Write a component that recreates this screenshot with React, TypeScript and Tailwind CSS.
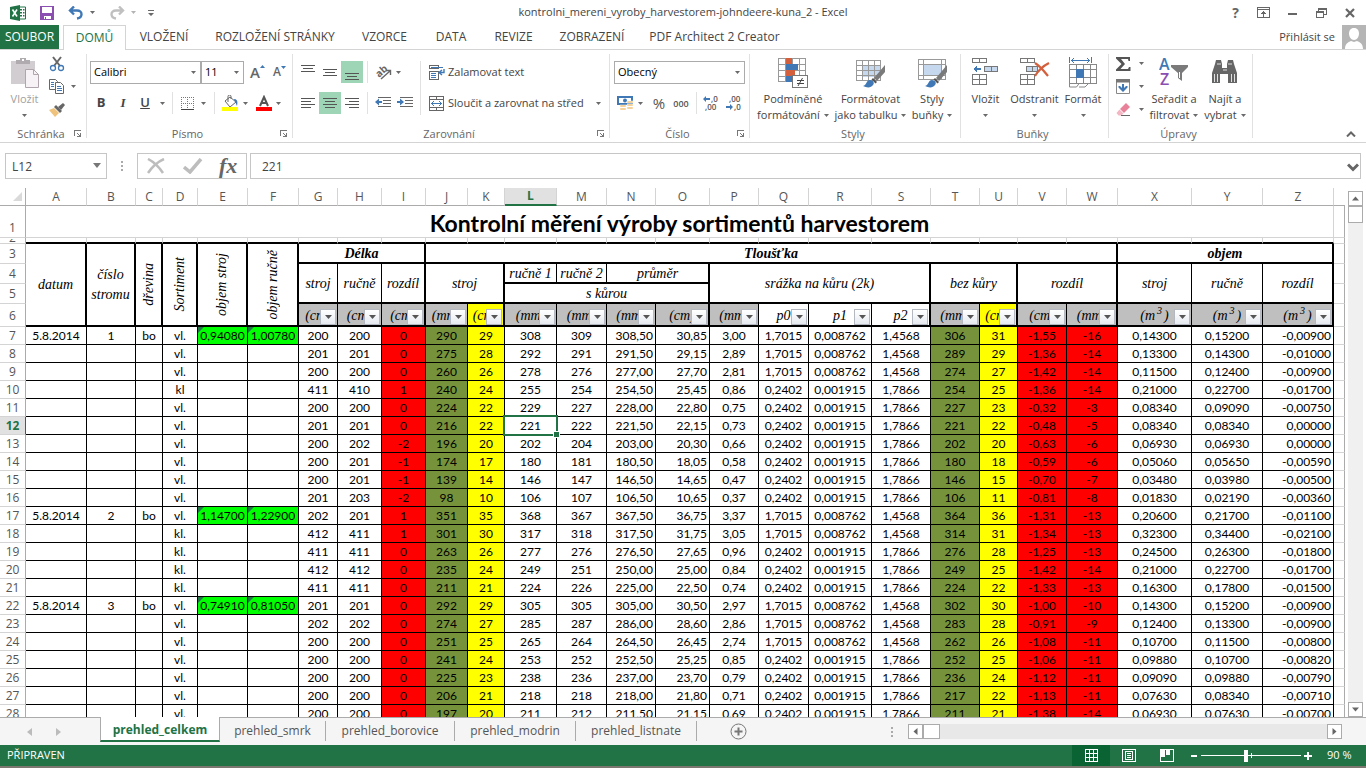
// App.tsx
// ─────────────────────────────────────────────────────
// Spreadsheet window: title bar, ribbon, formula bar,
// measurement sheet, sheet tabs and status bar.
// ─────────────────────────────────────────────────────

import type { ReactNode } from 'react';

/* ── Sheet data ─────────────────────────────────────── */

const COLUMNS: [string, string][] = [
  ['A', 'w-[61px]'],
  ['B', 'w-[49px]'],
  ['C', 'w-[27px]'],
  ['D', 'w-[35px]'],
  ['E', 'w-[50px]'],
  ['F', 'w-[51px]'],
  ['G', 'w-[39px]'],
  ['H', 'w-[44px]'],
  ['I', 'w-[44px]'],
  ['J', 'w-[42px]'],
  ['K', 'w-[37px]'],
  ['L', 'w-[52px]'],
  ['M', 'w-[50px]'],
  ['N', 'w-[49px]'],
  ['O', 'w-[54px]'],
  ['P', 'w-[49px]'],
  ['Q', 'w-[50px]'],
  ['R', 'w-[63px]'],
  ['S', 'w-[59px]'],
  ['T', 'w-[49px]'],
  ['U', 'w-[38px]'],
  ['V', 'w-[49px]'],
  ['W', 'w-[51px]'],
  ['X', 'w-[74px]'],
  ['Y', 'w-[71px]'],
  ['Z', 'w-[71px]'],
];

// Each line: sortiment followed by the values of columns G to Z
const MEASUREMENTS = [
  'vl. 200 200 0 290 29 308 309 308,50 30,85 3,00 1,7015 0,008762 1,4568 306 31 -1,55 -16 0,14300 0,15200 -0,00900',
  'vl. 201 201 0 275 28 292 291 291,50 29,15 2,89 1,7015 0,008762 1,4568 289 29 -1,36 -14 0,13300 0,14300 -0,01000',
  'vl. 200 200 0 260 26 278 276 277,00 27,70 2,81 1,7015 0,008762 1,4568 274 27 -1,42 -14 0,11500 0,12400 -0,00900',
  'kl 411 410 1 240 24 255 254 254,50 25,45 0,86 0,2402 0,001915 1,7866 254 25 -1,36 -14 0,21000 0,22700 -0,01700',
  'vl. 200 200 0 224 22 229 227 228,00 22,80 0,75 0,2402 0,001915 1,7866 227 23 -0,32 -3 0,08340 0,09090 -0,00750',
  'vl. 201 201 0 216 22 221 222 221,50 22,15 0,73 0,2402 0,001915 1,7866 221 22 -0,48 -5 0,08340 0,08340 0,00000',
  'vl. 200 202 -2 196 20 202 204 203,00 20,30 0,66 0,2402 0,001915 1,7866 202 20 -0,63 -6 0,06930 0,06930 0,00000',
  'vl. 200 201 -1 174 17 180 181 180,50 18,05 0,58 0,2402 0,001915 1,7866 180 18 -0,59 -6 0,05060 0,05650 -0,00590',
  'vl. 200 201 -1 139 14 146 147 146,50 14,65 0,47 0,2402 0,001915 1,7866 146 15 -0,70 -7 0,03480 0,03980 -0,00500',
  'vl. 201 203 -2 98 10 106 107 106,50 10,65 0,37 0,2402 0,001915 1,7866 106 11 -0,81 -8 0,01830 0,02190 -0,00360',
  'vl. 202 201 1 351 35 368 367 367,50 36,75 3,37 1,7015 0,008762 1,4568 364 36 -1,31 -13 0,20600 0,21700 -0,01100',
  'kl. 412 411 1 301 30 317 318 317,50 31,75 3,05 1,7015 0,008762 1,4568 314 31 -1,34 -13 0,32300 0,34400 -0,02100',
  'kl. 411 411 0 263 26 277 276 276,50 27,65 0,96 0,2402 0,001915 1,7866 276 28 -1,25 -13 0,24500 0,26300 -0,01800',
  'kl. 412 412 0 235 24 249 251 250,00 25,00 0,84 0,2402 0,001915 1,7866 249 25 -1,42 -14 0,21000 0,22700 -0,01700',
  'kl. 411 411 0 211 21 224 226 225,00 22,50 0,74 0,2402 0,001915 1,7866 224 22 -1,33 -13 0,16300 0,17800 -0,01500',
  'vl. 201 201 0 292 29 305 305 305,00 30,50 2,97 1,7015 0,008762 1,4568 302 30 -1,00 -10 0,14300 0,15200 -0,00900',
  'vl. 202 202 0 274 27 285 287 286,00 28,60 2,86 1,7015 0,008762 1,4568 283 28 -0,91 -9 0,12400 0,13300 -0,00900',
  'vl. 200 200 0 251 25 265 264 264,50 26,45 2,74 1,7015 0,008762 1,4568 262 26 -1,08 -11 0,10700 0,11500 -0,00800',
  'vl. 200 200 0 241 24 253 252 252,50 25,25 0,85 0,2402 0,001915 1,7866 252 25 -1,06 -11 0,09880 0,10700 -0,00820',
  'vl. 200 200 0 225 23 238 236 237,00 23,70 0,79 0,2402 0,001915 1,7866 236 24 -1,12 -11 0,09090 0,09880 -0,00790',
  'vl. 200 200 0 206 21 218 218 218,00 21,80 0,71 0,2402 0,001915 1,7866 217 22 -1,13 -11 0,07630 0,08340 -0,00710',
  'vl. 200 200 0 197 20 211 212 211,50 21,15 0,69 0,2402 0,001915 1,7866 211 21 -1,38 -14 0,06930 0,07630 -0,00700',
];

const FIRST_ROW = 7;

// Columns A, B, C, E and F are filled only on the first row of a tree
const TREES: Record<number, string[]> = {
  7: ['5.8.2014', '1', 'bo', '0,94080', '1,00780'],
  17: ['5.8.2014', '2', 'bo', '1,14700', '1,22900'],
  22: ['5.8.2014', '3', 'bo', '0,74910', '0,81050'],
};

const FILL: Record<string, string> = {
  I: 'bg-[#ff0000]',
  J: 'bg-[#76933c]',
  K: 'bg-[#ffff00]',
  T: 'bg-[#76933c]',
  U: 'bg-[#ffff00]',
  V: 'bg-[#ff0000]',
  W: 'bg-[#ff0000]',
};

const RIGHT_ALIGNED = ['N', 'O', 'Z'];

const FILTERS: { unit: string; plain?: boolean; yellow?: boolean; cubic?: boolean; thick?: boolean }[] = [
  { unit: '(cm)' },
  { unit: '(cm)' },
  { unit: '(cm)', thick: true },
  { unit: '(mm)' },
  { unit: '(cm)', yellow: true, thick: true },
  { unit: '(mm)' },
  { unit: '(mm)' },
  { unit: '(mm)' },
  { unit: '(cm)', thick: true },
  { unit: '(mm)' },
  { unit: 'p0', plain: true },
  { unit: 'p1', plain: true },
  { unit: 'p2', plain: true, thick: true },
  { unit: '(mm)' },
  { unit: '(cm)', yellow: true, thick: true },
  { unit: '(cm)' },
  { unit: '(mm)', thick: true },
  { unit: '(m', cubic: true },
  { unit: '(m', cubic: true },
  { unit: '(m', cubic: true, thick: true },
];

/* ── Small shared pieces ────────────────────────────── */

function Caret() {
  return (
    <svg className="shrink-0" width="5" height="3" viewBox="0 0 5 3" aria-hidden="true">
      <path d="M0 0h5L2.5 3z" fill="#6a6a6a" />
    </svg>
  );
}

function CaretButton({ label }: { label: string }) {
  return (
    <button type="button" aria-label={label} className="flex h-[22px] w-3 items-center justify-center">
      <Caret />
    </button>
  );
}

function IconButton({ label, active, children }: { label: string; active?: boolean; children: ReactNode }) {
  return (
    <button
      type="button"
      aria-label={label}
      className={`flex h-[22px] w-[22px] shrink-0 items-center justify-center ${active ? 'bg-[#9fd5b7]' : ''}`}
    >
      {children}
    </button>
  );
}

function Divider() {
  return <div className="h-[22px] w-px shrink-0 bg-[#e1e1e1]" />;
}

function Group({ name, width, launcher, children }: { name: string; width: string; launcher?: boolean; children: ReactNode }) {
  return (
    <>
      <section aria-label={name} className={`flex shrink-0 flex-col ${width}`}>
        <div className="flex h-[76px]">{children}</div>
        <div className="flex h-4 items-center pr-1 text-[#666]">
          <span className="grow pl-2 text-center">{name}</span>
          <span className="w-2">
            {launcher && (
              <button type="button" aria-label={`${name} – další možnosti`} className="block">
                <svg width="8" height="8" viewBox="0 0 8 8" shapeRendering="crispEdges" fill="#777" aria-hidden="true">
                  <path d="M0 0h7v1H1v5H0zM3 3h1v1h1v1h1V3h1v4H3V6h2V5H4V4H3z" />
                </svg>
              </button>
            )}
          </span>
        </div>
      </section>
      <div className="my-1 w-px shrink-0 bg-[#e1e1e1]" />
    </>
  );
}

function BigButton({ icon, lines, width, muted }: { icon: ReactNode; lines: [string, string]; width: string; muted?: boolean }) {
  return (
    <button
      type="button"
      className={`flex shrink-0 flex-col items-center pt-[7px] leading-4 whitespace-nowrap ${width} ${muted ? 'text-[#a0a0a0]' : 'text-[#444]'}`}
    >
      <span className="mb-[2px] flex h-8 items-start">{icon}</span>
      <span>{lines[0]}</span>
      <span className="flex h-4 items-center">
        {lines[1] && <span className="mr-1">{lines[1]}</span>}
        <Caret />
      </span>
    </button>
  );
}

function Lines({ rows, y = 0 }: { rows: [number, number][]; y?: number }) {
  return (
    <svg width="16" height="16" viewBox="0 0 16 16" shapeRendering="crispEdges" fill="#555" aria-hidden="true">
      {rows.map(([x, w], i) => (
        <rect key={i} x={x} y={y + i * 3} width={w} height="1" />
      ))}
    </svg>
  );
}

/* ── Title bar ──────────────────────────────────────── */

function TitleBar() {
  return (
    <header className="relative flex h-[25px] shrink-0 items-center justify-between">
      <div className="flex items-center pl-[10px]">
        <svg width="16" height="16" viewBox="0 0 16 16" aria-hidden="true">
          <path d="M9 2h6.5v12H9" fill="#fff" stroke="#217346" />
          <path d="M10 4h2v1.5h-2zm3 0h1.5v1.5H13zM10 7h2v1.5h-2zm3 0h1.5v1.5H13zM10 10h2v1.5h-2zm3 0h1.5v1.5H13z" fill="#217346" />
          <path d="M0 2l10-2v16L0 14z" fill="#217346" />
          <path d="M2.5 4.500l4.500 7M7 4.500l-4.500 7" stroke="#fff" strokeWidth="1.600" />
        </svg>
        <button type="button" aria-label="Uložit" className="ml-[14px]">
          <svg width="14" height="14" viewBox="0 0 14 14" shapeRendering="crispEdges" aria-hidden="true">
            <path d="M0 0h14v14H0z" fill="#8a4fb0" />
            <path d="M2 1h10v6H2zM4 10h7v3H6v-2H5v2H4z" fill="#fff" />
          </svg>
        </button>
        <button type="button" aria-label="Zpět" className="ml-[14px]">
          <svg width="16" height="14" viewBox="0 0 16 14" fill="none" stroke="#3f78b5" strokeWidth="2.400" aria-hidden="true">
            <path d="M6 0.500L2 4.500l4 4M2 4.500h7c6 0 6 7 0 8" />
          </svg>
        </button>
        <span className="ml-[6px]"><Caret /></span>
        <button type="button" aria-label="Znovu" className="ml-[14px]">
          <svg width="16" height="14" viewBox="0 0 16 14" fill="none" stroke="#c0c0c0" strokeWidth="2.400" aria-hidden="true">
            <path d="M10 0.500l4 4-4 4M14 4.500H7c-6 0-6 7 0 8" />
          </svg>
        </button>
        <span className="ml-[6px] opacity-50"><Caret /></span>
        <button type="button" aria-label="Panel nástrojů Rychlý přístup" className="ml-3">
          <svg width="6" height="6" viewBox="0 0 6 6" fill="#6a6a6a" aria-hidden="true">
            <path d="M0 0h6v1H0zM0 3h6L3 6z" />
          </svg>
        </button>
      </div>
      <h1 className="absolute inset-x-0 text-center text-[#444]">
        kontrolni_mereni_vyroby_harvestorem-johndeere-kuna_2 - Excel
      </h1>
      <div className="relative flex items-center gap-[18px] pr-[11px] text-[#666]">
        <button type="button" aria-label="Nápověda" className="text-sm leading-none font-bold">?</button>
        <button type="button" aria-label="Možnosti zobrazení pásu karet">
          <svg width="13" height="11" viewBox="0 0 13 11" shapeRendering="crispEdges" fill="#666" aria-hidden="true">
            <path d="M0 0h13v11H0zM1 1v1h11V1zM1 3v7h11V3z" fillRule="evenodd" />
            <path d="M6 4h1v1h1v1h1v1H7v3H6V7H4V6h1V5h1z" />
          </svg>
        </button>
        <button type="button" aria-label="Minimalizovat">
          <svg width="10" height="10" viewBox="0 0 10 10" aria-hidden="true"><path d="M0 5h9v2H0z" fill="#666" /></svg>
        </button>
        <button type="button" aria-label="Obnovit">
          <svg width="11" height="10" viewBox="0 0 11 10" fill="none" stroke="#666" shapeRendering="crispEdges" aria-hidden="true">
            <path d="M2.500 3V.5h8V6H8M2 1.500h8M.5 3.500h7v6h-7zM0 4.500h8" />
          </svg>
        </button>
        <button type="button" aria-label="Zavřít">
          <svg width="10" height="10" viewBox="0 0 10 10" stroke="#666" strokeWidth="2.200" aria-hidden="true">
            <path d="M1 1l8 8M9 1L1 9" />
          </svg>
        </button>
      </div>
    </header>
  );
}

/* ── Ribbon tabs ────────────────────────────────────── */

const TABS: [string, string][] = [
  ['VLOŽENÍ', 'w-[76px]'],
  ['ROZLOŽENÍ STRÁNKY', 'w-[146px]'],
  ['VZORCE', 'w-[73px]'],
  ['DATA', 'w-[60px]'],
  ['REVIZE', 'w-[65px]'],
  ['ZOBRAZENÍ', 'w-[92px]'],
  ['PDF Architect 2 Creator', 'w-[153px]'],
];

function RibbonTabs() {
  return (
    <nav className="flex h-[25px] shrink-0 border-b border-[#d4d4d4] text-xs text-[#444]">
      <button type="button" className="w-[59px] bg-[#217346] text-white">SOUBOR</button>
      <button type="button" className="-mb-px ml-1 w-[63px] border border-b-0 border-[#d4d4d4] bg-white text-[#217346]">
        DOMŮ
      </button>
      {TABS.map(([name, width]) => (
        <button key={name} type="button" className={`shrink-0 whitespace-nowrap ${width}`}>{name}</button>
      ))}
      <button type="button" className="ml-auto pr-[7px] text-[11px]">Přihlásit se</button>
      <svg width="24" height="24" viewBox="0 0 24 24" className="shrink-0 bg-[#b5b5b5]" fill="#fff" aria-hidden="true">
        <path d="M12 3c3.500 0 5 2.500 5 5.500S15 15 12 15s-5-3.500-5-6.500S8.500 3 12 3z" />
        <path d="M3 24c0-5 3-7 6-8l3 1 3-1c3 1 6 3 6 8z" />
      </svg>
    </nav>
  );
}

/* ── Ribbon groups ──────────────────────────────────── */

function ClipboardGroup() {
  return (
    <Group name="Schránka" width="w-[86px]" launcher>
      <BigButton
        width="w-[49px]"
        muted
        lines={['Vložit', '']}
        icon={
          <svg width="30" height="32" viewBox="0 0 30 32" aria-hidden="true">
            <path d="M1 4h24v23H1z" fill="#d2cdd0" />
            <path d="M6 7V3h4V1h6v2h4v4z" fill="#b0abae" />
            <path d="M12 2h2v2h-2z" fill="#fff" />
            <path d="M15.500 12.500h8l5 5v13h-13z" fill="#f7f2f5" stroke="#b0a5ac" />
            <path d="M23.500 12.500v5h5" fill="none" stroke="#b0a5ac" />
          </svg>
        }
      />
      <div className="flex flex-col pt-[2px]">
        <button type="button" aria-label="Vyjmout" className="flex h-[23px] items-center">
          <svg width="16" height="16" viewBox="0 0 16 16" fill="none" aria-hidden="true">
            <path d="M4 1l7 9M12 1L5 10" stroke="#666" strokeWidth="2" />
            <circle cx="4" cy="12" r="2.500" stroke="#3f78b5" strokeWidth="1.300" />
            <circle cx="12" cy="12" r="2.500" stroke="#3f78b5" strokeWidth="1.300" />
          </svg>
        </button>
        <div className="flex h-[23px] items-center gap-[6px]">
          <button type="button" aria-label="Kopírovat">
            <svg width="16" height="15" viewBox="0 0 16 15" fill="#fff" stroke="#666" aria-hidden="true">
              <path d="M.5 .5h6l2 2v8h-8z" />
              <path d="M2 3.500h3M2 5.500h3M2 7.500h3" stroke="#3f78b5" />
              <path d="M6.500 3.500h5l3 3v8h-8z" />
              <path d="M8 7.500h4M8 9.500h5M8 11.500h5" stroke="#3f78b5" />
            </svg>
          </button>
          <Caret />
        </div>
        <button type="button" aria-label="Kopírovat formát" className="flex h-[23px] items-center">
          <svg width="16" height="14" viewBox="0 0 16 14" aria-hidden="true">
            <path d="M0 7l5-2 5 5-4 4z" fill="#efc37c" />
            <path d="M5 4l2-2 6 6-2 2z" fill="#666" />
            <path d="M9 4l5-4 2 2-4 5z" fill="#666" />
          </svg>
        </button>
      </div>
    </Group>
  );
}

function FontGroup() {
  return (
    <Group name="Písmo" width="w-[205px]" launcher>
      <div className="flex flex-col gap-[9px] pt-[11px] pl-[3px]">
        <div className="flex h-[22px] items-center">
          <div className="relative h-[23px] w-[111px]">
            <select aria-label="Písmo" className="h-full w-full appearance-none border border-[#ababab] bg-white pl-[3px] text-black">
              <option>Calibri</option>
            </select>
            <span className="pointer-events-none absolute inset-y-0 right-[5px] flex items-center"><Caret /></span>
          </div>
          <div className="relative h-[23px] w-[43px]">
            <select aria-label="Velikost písma" className="h-full w-full appearance-none border border-[#ababab] bg-white pl-[3px] text-black">
              <option>11</option>
            </select>
            <span className="pointer-events-none absolute inset-y-0 right-[5px] flex items-center"><Caret /></span>
          </div>
          <button type="button" aria-label="Zvětšit písmo" className="ml-[6px] flex w-4">
            <span className="text-[15px] leading-none font-semibold text-[#666]">A</span>
            <svg width="5" height="3" viewBox="0 0 5 3" aria-hidden="true"><path d="M0 3h5L2.500 0z" fill="#3f78b5" /></svg>
          </button>
          <button type="button" aria-label="Zmenšit písmo" className="ml-[7px] flex w-4">
            <span className="text-xs leading-none font-semibold text-[#666]">A</span>
            <svg width="5" height="3" viewBox="0 0 5 3" aria-hidden="true"><path d="M0 0h5L2.500 3z" fill="#3f78b5" /></svg>
          </button>
        </div>
        <div className="flex h-[22px] items-center text-[13px] text-[#444]">
          <IconButton label="Tučné"><b>B</b></IconButton>
          <IconButton label="Kurzíva"><i className="font-['Liberation_Serif',serif] font-bold">I</i></IconButton>
          <IconButton label="Podtržené"><u className="font-semibold">U</u></IconButton>
          <CaretButton label="Druh podtržení" />
          <span className="mr-[5px] ml-1"><Divider /></span>
          <button type="button" aria-label="Ohraničení" className="mx-[3px]">
            <svg width="13" height="13" viewBox="0 0 13 13" fill="none" stroke="#777" shapeRendering="crispEdges" aria-hidden="true">
              <path d="M.5 0v12M6.500 0v12M12.500 0v12M0 .5h13M0 6.500h13" strokeDasharray="1 1" />
              <path d="M0 12.500h13" stroke="#444" />
            </svg>
          </button>
          <CaretButton label="Druh ohraničení" />
          <span className="ml-[5px]"><Divider /></span>
          <button type="button" aria-label="Barva výplně" className="ml-[7px]">
            <svg width="17" height="16" viewBox="0 0 17 16" aria-hidden="true">
              <path d="M3 6l5-4 6 5-6 5z" fill="#fff" stroke="#666" />
              <path d="M6 7V1.500a1.500 1.500 0 013 0V4" fill="none" stroke="#666" />
              <path d="M12 4c3 0 4 2 3 7-1-2-1-3-2-4z" fill="#3f78b5" />
              <path d="M0 12h16v4H0z" fill="#ff0" />
            </svg>
          </button>
          <CaretButton label="Další barvy výplně" />
          <button type="button" aria-label="Barva písma" className="ml-[5px]">
            <svg width="16" height="16" viewBox="0 0 16 16" aria-hidden="true">
              <path d="M4 11L8 2l4 9M5.500 8h5" fill="none" stroke="#555" strokeWidth="2" />
              <path d="M0 12h16v4H0z" fill="#f00" />
            </svg>
          </button>
          <CaretButton label="Další barvy písma" />
        </div>
      </div>
    </Group>
  );
}

function AlignGroup() {
  return (
    <Group name="Zarovnání" width="w-[316px]" launcher>
      <div className="flex flex-col gap-[9px] pt-[11px] pl-1">
        <div className="flex h-[22px] items-center">
          <IconButton label="Zarovnat nahoru"><Lines rows={[[1, 14], [3, 10], [1, 14]]} y={1} /></IconButton>
          <IconButton label="Zarovnat na střed svisle"><Lines rows={[[1, 14], [3, 10], [1, 14]]} y={5} /></IconButton>
          <IconButton label="Zarovnat dolů" active><Lines rows={[[1, 14], [3, 10], [1, 14]]} y={9} /></IconButton>
          <span className="ml-1"><Divider /></span>
          <button type="button" aria-label="Orientace" className="ml-2">
            <svg width="16" height="15" viewBox="0 0 16 15" className="overflow-visible" aria-hidden="true">
              <text x="0" y="11" fontSize="10" fontWeight="700" fontFamily="Open Sans" fill="#666" transform="rotate(-42 4 8)">ab</text>
              <path d="M5 14l9-8M14.500 10V5.500H10" fill="none" stroke="#666" strokeWidth="1.400" />
            </svg>
          </button>
          <CaretButton label="Další orientace" />
        </div>
        <div className="flex h-[22px] items-center">
          <IconButton label="Zarovnat vlevo"><Lines rows={[[1, 14], [1, 10], [1, 14], [1, 10]]} y={3} /></IconButton>
          <IconButton label="Zarovnat na střed" active><Lines rows={[[1, 14], [3, 10], [1, 14], [3, 10]]} y={3} /></IconButton>
          <IconButton label="Zarovnat vpravo"><Lines rows={[[1, 14], [5, 10], [1, 14], [5, 10]]} y={3} /></IconButton>
          <span className="ml-1"><Divider /></span>
          <button type="button" aria-label="Zmenšit odsazení" className="ml-[7px]">
            <svg width="16" height="12" viewBox="0 0 16 12" aria-hidden="true">
              <path d="M3 .5h13M8 3.500h8M8 6.500h8M3 9.500h13" stroke="#666" shapeRendering="crispEdges" />
              <path d="M0 5l4-3.500V4h3v2H4v2.500z" fill="#3f78b5" />
            </svg>
          </button>
          <button type="button" aria-label="Zvětšit odsazení" className="ml-[6px]">
            <svg width="16" height="12" viewBox="0 0 16 12" aria-hidden="true">
              <path d="M3 .5h13M8 3.500h8M8 6.500h8M3 9.500h13" stroke="#666" shapeRendering="crispEdges" />
              <path d="M7 5L3 1.500V4H0v2h3v2.500z" fill="#3f78b5" />
            </svg>
          </button>
        </div>
      </div>
      <div className="mt-[11px] ml-[7px] h-[54px] w-px bg-[#e1e1e1]" />
      <div className="flex flex-col gap-[9px] pt-[11px] pl-2 text-[#444]">
        <button type="button" className="flex h-[22px] items-center gap-[3px]">
          <svg width="16" height="16" viewBox="0 0 16 16" fill="none" stroke="#666" aria-hidden="true">
            <path d="M.5 1.500h9v3h-9zM.5 7.500h9v8h-9z" shapeRendering="crispEdges" />
            <path d="M2 3.500h12M2 9.500h5M2 11.500h5M2 13.500h5" stroke="#3f78b5" shapeRendering="crispEdges" />
            <path d="M15 5v3.500h-4M13 6l-3 2.500 3 2.500" stroke="#3f78b5" strokeWidth="1.400" />
          </svg>
          Zalamovat text
        </button>
        <div className="flex h-[22px] items-center">
          <button type="button" className="flex items-center gap-[3px] whitespace-nowrap">
            <svg width="16" height="15" viewBox="0 0 16 15" fill="none" stroke="#666" aria-hidden="true">
              <path d="M.5 .5h14v14H.5zM0 3.500h15M0 11.500h15M7.500 0v4M7.500 11v4" shapeRendering="crispEdges" />
              <path d="M2 7.500h11M5 5L2.500 7.500 5 10M10 5l2.500 2.500L10 10" stroke="#3f78b5" />
            </svg>
            Sloučit a zarovnat na střed
          </button>
          <span className="ml-auto pl-[9px]"><CaretButton label="Možnosti sloučení" /></span>
        </div>
      </div>
    </Group>
  );
}

function NumberGroup() {
  return (
    <Group name="Číslo" width="w-[139px]" launcher>
      <div className="flex flex-col gap-[9px] pt-[11px] pl-1">
        <div className="relative h-[22px] w-[131px]">
          <select aria-label="Formát čísla" className="h-[23px] w-full appearance-none border border-[#ababab] bg-white pl-[3px] text-black">
            <option>Obecný</option>
          </select>
          <span className="pointer-events-none absolute inset-y-0 right-[5px] flex items-center"><Caret /></span>
        </div>
        <div className="flex h-[22px] items-center text-[#555]">
          <button type="button" aria-label="Účetní formát" className="ml-[3px]">
            <svg width="17" height="16" viewBox="0 0 17 16" aria-hidden="true">
              <path d="M0 1h16v9H0z" fill="#3f78b5" />
              <path d="M2 3h12v5H2z" fill="#fff" />
              <circle cx="8" cy="5.500" r="2" fill="#3f78b5" />
              <path d="M10 6h6v2h-6zM10 9h6v2h-6zM10 12h6v2h-6zM3 10h6v2H3zM3 13h6v2H3z" fill="#efc37c" stroke="#fff" strokeWidth=".5" />
            </svg>
          </button>
          <CaretButton label="Další měny" />
          <button type="button" aria-label="Styl procent" className="ml-1 w-[18px] text-[15px] leading-none">%</button>
          <button type="button" aria-label="Styl čárky" className="ml-[4px] w-[18px] text-[9px] leading-none font-semibold">000</button>
          <span className="ml-[6px]"><Divider /></span>
          <button type="button" aria-label="Přidat desetinné místo" className="ml-[6px]">
            <svg width="16" height="16" viewBox="0 0 16 16" className="overflow-visible" fontSize="8" fontWeight="600" fontFamily="Open Sans" fill="#555" aria-hidden="true">
              <path d="M0 4l3-3v2h4v2H3v2z" fill="#3f78b5" />
              <text x="8" y="7">,0</text>
              <text x="2" y="15">,00</text>
            </svg>
          </button>
          <button type="button" aria-label="Odebrat desetinné místo" className="ml-[7px]">
            <svg width="16" height="16" viewBox="0 0 16 16" className="overflow-visible" fontSize="8" fontWeight="600" fontFamily="Open Sans" fill="#555" aria-hidden="true">
              <text x="3" y="7">,00</text>
              <path d="M7 12L4 9v2H0v2h4v2z" fill="#3f78b5" />
              <text x="8" y="15">,0</text>
            </svg>
          </button>
        </div>
      </div>
    </Group>
  );
}

function Brush() {
  return (
    <>
      <path d="M30 8v7l-8 9-3-3z" fill="#7a7a7a" />
      <path d="M18 21l4 4-1.500 1.500-4-4z" fill="#555" />
      <path d="M8 29c4-1 3-6 7-6 3 0 5 3 3 5-2 3-6 3-10 1z" fill="#3f78b5" />
    </>
  );
}

function StylesGroup() {
  return (
    <Group name="Styly" width="w-[210px]">
      <BigButton
        width="ml-1 w-[78px]"
        lines={['Podmíněné', 'formátování']}
        icon={
          <svg width="31" height="31" viewBox="0 0 31 31" shapeRendering="crispEdges" aria-hidden="true">
            <path d="M.5 1.500h27v23H.5zM0 7.500h28M0 13.500h28M0 19.500h28M7.500 1v24M14.500 1v24M21.500 1v24" fill="#fff" stroke="#999" />
            <path d="M8 1h6v6H8zM8 13h9v6H8z" fill="#d35f3c" />
            <path d="M8 7h12v6H8zM8 19h6v6H8z" fill="#3f78b5" />
            <path d="M14.500 18.500h15v12h-15z" fill="#fff" stroke="#777" />
            <path d="M19 23h7v1h-7zM19 26h7v1h-7z" fill="#444" />
            <path d="M24.500 21L20 29" stroke="#444" shapeRendering="auto" />
          </svg>
        }
      />
      <BigButton
        width="w-[77px]"
        lines={['Formátovat', 'jako tabulku']}
        icon={
          <svg width="31" height="31" viewBox="0 0 31 31" aria-hidden="true">
            <path d="M1 3h24v23H1z" fill="#fff" />
            <path d="M7 8h18v12H7z" fill="#c5d8ee" />
            <path d="M1.500 3.500h24v20h-24zM1 8.500h25M1 13.500h25M1 18.500h25M7.500 3v21M13.500 3v21M19.500 3v21" fill="none" stroke="#999" shapeRendering="crispEdges" />
            <Brush />
          </svg>
        }
      />
      <BigButton
        width="w-[46px]"
        lines={['Styly', 'buňky']}
        icon={
          <svg width="31" height="31" viewBox="0 0 31 31" aria-hidden="true">
            <path d="M1.500 2.500h27v20h-27zM1 7.500h28M1 18.500h28M6.500 2v21M24.500 2v21" fill="#fff" stroke="#999" shapeRendering="crispEdges" />
            <path d="M7 8h17v10H7z" fill="#c5d8ee" />
            <Brush />
          </svg>
        }
      />
    </Group>
  );
}

function CellsGroup() {
  return (
    <Group name="Buňky" width="w-[147px]">
      <BigButton
        width="w-[49px]"
        lines={['Vložit', '']}
        icon={
          <svg width="27" height="30" viewBox="0 0 27 30" shapeRendering="crispEdges" fill="none" stroke="#777" aria-hidden="true">
            <path d="M.5 1.500h14v4H.5zM7.500 1v5M.5 17.500h14v10H.5zM0 22.500h15M7.500 17v11" />
            <path d="M12.500 9.500h13v5h-13zM19.500 9v6" fill="#c5d8ee" />
            <path d="M1 12l4-3v2h4v2H5v2z" fill="#3f78b5" stroke="none" />
          </svg>
        }
      />
      <BigButton
        width="w-[49px]"
        lines={['Odstranit', '']}
        icon={
          <svg width="30" height="30" viewBox="0 0 30 30" fill="none" stroke="#777" aria-hidden="true">
            <path d="M.5 1.500h14v4H.5zM7.500 1v5M.5 17.500h14v10H.5zM0 22.500h15M7.500 17v11" shapeRendering="crispEdges" />
            <path d="M6.500 9.500h11v5h-11zM12.500 9v6" fill="#c5d8ee" shapeRendering="crispEdges" />
            <path d="M15 6c5 3 9 8 13 13M29 6c-6 3-11 8-14 13" stroke="#d35f3c" strokeWidth="2.200" />
          </svg>
        }
      />
      <BigButton
        width="w-[48px]"
        lines={['Formát', '']}
        icon={
          <svg width="30" height="32" viewBox="0 0 30 32" fill="none" stroke="#888" aria-hidden="true">
            <path d="M1.500 7.500h27v19h-27zM1 12.500h28M1 20.500h28M8.500 7v20M15.500 7v20M22.500 7v20" shapeRendering="crispEdges" />
            <path d="M8 12h8v9H8z" fill="#3f78b5" stroke="none" />
            <path d="M1.500 26v4h7l3-4M11 30h6l4-4" />
            <path d="M1.500 0v6M23.500 0v6M3 3.500h19M6 1L3.500 3.500 6 6M19 1l2.500 2.500L19 6" stroke="#3f78b5" />
          </svg>
        }
      />
    </Group>
  );
}

function EditingGroup() {
  return (
    <Group name="Úpravy" width="w-[143px]">
      <div className="flex w-[38px] flex-col pt-[2px] pl-[7px]">
        <div className="flex h-[23px] items-center gap-2">
          <button type="button" aria-label="Součet">
            <svg width="15" height="14" viewBox="0 0 15 14" aria-hidden="true">
              <path d="M0 0h14v4h-1.500L12 2H5l4 5-4.500 5H12l1-2h1.500v4H0v-1.500L5.500 7 0 1.500z" fill="#555" />
            </svg>
          </button>
          <Caret />
        </div>
        <div className="flex h-[23px] items-center gap-2">
          <button type="button" aria-label="Vyplnit">
            <svg width="15" height="15" viewBox="0 0 15 15" aria-hidden="true">
              <path d="M.5 .5h13v14H.5z" fill="#fff" stroke="#888" />
              <path d="M0 0h14v3.500H0z" fill="#777" />
              <path d="M6 5h2v4l2-2h1.500v1.500L7 13 2.500 8.500V7H4l2 2z" fill="#3f78b5" />
            </svg>
          </button>
          <Caret />
        </div>
        <div className="flex h-[23px] items-center gap-2">
          <button type="button" aria-label="Vymazat">
            <svg width="15" height="14" viewBox="0 0 15 14" aria-hidden="true">
              <path d="M4 6l6-6 4 4-6 6z" fill="#e8829a" />
              <path d="M3.500 6.500l4 4-2 2h-3L.5 10z" fill="#f3b6c3" />
              <path d="M5 12.500h9" stroke="#666" />
            </svg>
          </button>
          <Caret />
        </div>
      </div>
      <BigButton
        width="w-[54px]"
        lines={['Seřadit a', 'filtrovat']}
        icon={
          <svg width="30" height="30" viewBox="0 0 30 30" fontFamily="Open Sans" fontWeight="600" fontSize="16" aria-hidden="true">
            <text x="0" y="13" fill="#3f78b5">A</text>
            <text x="1" y="28" fill="#8a4fb0">Z</text>
            <path d="M12 8h17v2l-6 6v8l-4-3v-5l-7-6z" fill="#7a7a7a" />
            <path d="M20.500 15v6" stroke="#fff" />
          </svg>
        }
      />
      <BigButton
        width="w-[48px]"
        lines={['Najít a', 'vybrat']}
        icon={
          <svg width="28" height="30" viewBox="0 0 28 30" fill="#666" aria-hidden="true">
            <path d="M4 7l1-4h5l1 4v4h5V7l1-4h5l1 4 3 9v10h-9v-9h-8v9H1V16z" />
            <path d="M3.500 17v8M6.500 17v8M20.500 17v8M23.500 17v8M6 7h4M17 7h4M12 13h4" stroke="#fff" strokeWidth=".8" />
          </svg>
        }
      />
    </Group>
  );
}

function Ribbon() {
  return (
    <div className="flex h-[93px] shrink-0 overflow-hidden border-b border-[#d4d4d4]">
      <ClipboardGroup />
      <FontGroup />
      <AlignGroup />
      <NumberGroup />
      <StylesGroup />
      <CellsGroup />
      <EditingGroup />
      <button type="button" aria-label="Sbalit pás karet" className="mt-auto mr-[10px] mb-[5px] ml-auto">
        <svg width="10" height="6" viewBox="0 0 10 6" fill="none" stroke="#666" strokeWidth="2" aria-hidden="true">
          <path d="M1 5.500l4-4 4 4" />
        </svg>
      </button>
    </div>
  );
}

/* ── Formula bar ────────────────────────────────────── */

function FormulaBar() {
  return (
    <div className="flex h-[45px] shrink-0 items-start px-[5px] pt-[10px] text-xs text-[#444]">
      <div className="relative h-[26px] w-[102px] shrink-0">
        <input aria-label="Pole názvů" defaultValue="L12" className="h-full w-full border border-[#c6c6c6] pl-[6px]" />
        <svg className="absolute top-[10px] right-[6px]" width="8" height="5" viewBox="0 0 8 5" aria-hidden="true">
          <path d="M0 0h8L4 5z" fill="#777" />
        </svg>
      </div>
      <svg className="mx-[14px] mt-2 shrink-0" width="2" height="10" viewBox="0 0 2 10" fill="#aaa" aria-hidden="true">
        <path d="M0 0h2v2H0zM0 4h2v2H0zM0 8h2v2H0z" />
      </svg>
      <div className="flex h-[26px] w-[110px] shrink-0 items-center border border-[#c6c6c6] pl-[9px]">
        <button type="button" aria-label="Zrušit">
          <svg width="18" height="16" viewBox="0 0 18 16" fill="none" stroke="#bdbdbd" strokeWidth="2.500" aria-hidden="true">
            <path d="M1 1c6 3 11 8 15 14M17 1C10 4 5 9 1 15" />
          </svg>
        </button>
        <button type="button" aria-label="Zadat" className="ml-[18px]">
          <svg width="20" height="16" viewBox="0 0 20 16" fill="none" stroke="#bdbdbd" strokeWidth="3.500" aria-hidden="true">
            <path d="M1 9l6 5L18 1" />
          </svg>
        </button>
        <button
          type="button"
          aria-label="Vložit funkci"
          className="ml-4 font-['Liberation_Serif',serif] text-[22px] leading-none font-bold text-[#666] italic"
        >
          fx
        </button>
      </div>
      <div className="relative ml-[3px] h-[26px] grow">
        <input aria-label="Řádek vzorců" defaultValue="221" className="h-full w-full border border-[#c6c6c6] pl-[11px]" />
        <svg className="absolute top-[10px] right-[2px]" width="12" height="9" viewBox="0 0 12 9" fill="none" stroke="#666" strokeWidth="3" aria-hidden="true">
          <path d="M1 1.500l5 5 5-5" />
        </svg>
      </div>
    </div>
  );
}

/* ── Sheet ──────────────────────────────────────────── */

function RowNumber({ n, selected }: { n: number; selected?: boolean }) {
  return (
    <th
      scope="row"
      className={`border-r border-b border-b-[#d4d4d4] p-0 text-center font-['Open_Sans',sans-serif] text-xs leading-[17px] ${
        selected ? 'border-r-[#217346] bg-[#e1e1e1] font-bold text-[#217346]' : 'border-r-[#ababab] font-normal text-[#555]'
      }`}
    >
      {n}
    </th>
  );
}

function Spare() {
  return <td className="border-r border-b border-r-[#ababab] border-b-[#d4d4d4] p-0" />;
}

function HeadCell({ text, cols, rows, right = 'border-r-2', vertical, bold }: {
  text: string;
  cols?: number;
  rows?: number;
  right?: string;
  vertical?: boolean;
  bold?: boolean;
}) {
  return (
    <th
      colSpan={cols}
      rowSpan={rows}
      className={`border-b-2 border-black p-0 italic ${right} ${bold ? 'font-bold' : 'font-normal'} ${rows === 4 ? 'leading-5' : ''}`}
    >
      {vertical ? (
        <span className="inline-block rotate-180 align-middle whitespace-nowrap [writing-mode:vertical-rl]">{text}</span>
      ) : (
        text
      )}
    </th>
  );
}

function FilterCell({ unit, plain, yellow, cubic, thick }: (typeof FILTERS)[number]) {
  const fill = plain ? 'bg-white' : yellow ? 'bg-[#ffff00]' : 'bg-[#bfbfbf]';
  return (
    <th className={`relative border-b-2 border-black p-0 font-normal italic ${thick ? 'border-r-2' : 'border-r'} ${fill}`}>
      <span className="flex h-[21px] items-end justify-center overflow-hidden leading-[18px]">
        {unit}
        {cubic && (
          <>
            <sup className="top-0 self-start px-[2px] text-[10px] leading-[14px]">3</sup>)
          </>
        )}
      </span>
      <button
        type="button"
        aria-label="Filtr"
        className="absolute right-px bottom-0 flex h-4 w-4 items-center justify-center border border-[#b4b8c0] bg-linear-to-b from-white to-[#e6eaf0]"
      >
        <svg width="7" height="4" viewBox="0 0 7 4" aria-hidden="true"><path d="M0 0h7L3.500 4z" fill="#555" /></svg>
      </button>
    </th>
  );
}

function SelectionFrame() {
  return (
    <>
      <span className="pointer-events-none absolute -inset-[2px] z-10 border-2 border-[#217346]" />
      <span className="absolute -right-[4px] -bottom-[4px] z-20 h-[7px] w-[7px] border border-white bg-[#217346]" />
    </>
  );
}

function DataRow({ n, line }: { n: number; line: string }) {
  const [sort, ...values] = line.split(' ');
  const tree = TREES[n] ?? ['', '', '', '', ''];
  const cells = [tree[0], tree[1], tree[2], sort, tree[3], tree[4], ...values];

  return (
    <tr className="h-[18px]">
      <RowNumber n={n} selected={n === 12} />
      {cells.map((value, i) => {
        const col = COLUMNS[i][0];
        const volume = (col === 'E' || col === 'F') && value !== '';
        return (
          <td
            key={col}
            className={`relative border-r border-b border-black p-0 ${RIGHT_ALIGNED.includes(col) ? 'pr-[2px] text-right' : 'text-center'} ${
              volume ? 'bg-[#00ff00]' : FILL[col] ?? ''
            }`}
          >
            {volume && (
              <svg className="absolute top-0 left-0" width="6" height="6" viewBox="0 0 6 6" aria-hidden="true">
                <path d="M0 0h6L0 6z" fill="#217346" />
              </svg>
            )}
            {value}
            {n === 12 && col === 'L' && <SelectionFrame />}
          </td>
        );
      })}
      <Spare />
    </tr>
  );
}

function Sheet() {
  return (
    <table className="w-[1345px] table-fixed border-separate border-spacing-0 font-['Lato',sans-serif] text-xs leading-[17px] text-black">
      <colgroup>
        <col className="w-[26px]" />
        {COLUMNS.map(([name, width]) => (
          <col key={name} className={width} />
        ))}
        <col />
      </colgroup>
      <thead className="font-['Liberation_Serif',serif] text-sm leading-[17px]">
        <tr className="h-[18px] font-['Open_Sans',sans-serif] text-xs leading-4 text-[#555]">
          <td className="border-r border-b border-[#ababab] p-0">
            <svg className="mr-[3px] ml-auto" width="9" height="9" viewBox="0 0 9 9" aria-hidden="true">
              <path d="M9 0v9H0z" fill="#dadada" />
            </svg>
          </td>
          {COLUMNS.map(([name]) => (
            <th
              key={name}
              scope="col"
              className={`border-r p-0 border-r-[#d4d4d4] ${
                name === 'L' ? 'border-b-2 border-b-[#217346] bg-[#e1e1e1] font-bold text-[#217346]' : 'border-b border-b-[#ababab] font-normal'
              }`}
            >
              {name}
            </th>
          ))}
          <td className="border-b border-[#ababab] p-0" />
        </tr>
        <tr className="h-8">
          <th scope="row" className="border-r border-b border-r-[#ababab] border-b-[#d4d4d4] p-0 pb-px align-bottom font-['Open_Sans',sans-serif] text-xs font-normal text-[#555]">
            1
          </th>
          <th colSpan={26} className="border-r border-b border-[#d4d4d4] p-0 pt-[3px] text-center font-['Lato',sans-serif] text-[23px] leading-7 font-bold">
            Kontrolní měření výroby sortimentů harvestorem
          </th>
          <Spare />
        </tr>
        <tr className="h-[6px]">
          <th scope="row" className="border-r border-b border-r-[#ababab] border-b-[#d4d4d4] p-0 font-['Open_Sans',sans-serif] text-xs font-normal text-[#555]">
            <span className="flex h-[3px] items-end justify-center overflow-hidden leading-[9px]">2</span>
          </th>
          {COLUMNS.map(([name]) => (
            <td key={name} className="border-r border-b-2 border-r-[#d4d4d4] border-b-black p-0" />
          ))}
          <Spare />
        </tr>
        <tr className="h-5">
          <RowNumber n={3} />
          <HeadCell text="datum" rows={4} />
          <HeadCell text="číslo stromu" rows={4} />
          <HeadCell text="dřevina" rows={4} vertical />
          <HeadCell text="Sortiment" rows={4} vertical />
          <HeadCell text="objem stroj" rows={4} vertical />
          <HeadCell text="objem ručně" rows={4} vertical />
          <HeadCell text="Délka" cols={3} bold />
          <HeadCell text="Tloušťka" cols={14} bold />
          <HeadCell text="objem" cols={3} bold />
          <Spare />
        </tr>
        <tr className="h-5">
          <RowNumber n={4} />
          <HeadCell text="stroj" rows={2} right="border-r" />
          <HeadCell text="ručně" rows={2} right="border-r" />
          <HeadCell text="rozdíl" rows={2} />
          <HeadCell text="stroj" cols={2} rows={2} />
          <HeadCell text="ručně 1" right="border-r" />
          <HeadCell text="ručně 2" right="border-r" />
          <HeadCell text="průměr" cols={2} />
          <HeadCell text="srážka na kůru (2k)" cols={4} rows={2} />
          <HeadCell text="bez kůry" cols={2} rows={2} />
          <HeadCell text="rozdíl" cols={2} rows={2} />
          <HeadCell text="stroj" rows={2} right="border-r" />
          <HeadCell text="ručně" rows={2} right="border-r" />
          <HeadCell text="rozdíl" rows={2} />
          <Spare />
        </tr>
        <tr className="h-5">
          <RowNumber n={5} />
          <HeadCell text="s kůrou" cols={4} />
          <Spare />
        </tr>
        <tr className="h-[23px]">
          <RowNumber n={6} />
          {FILTERS.map((filter, i) => (
            <FilterCell key={i} {...filter} />
          ))}
          <Spare />
        </tr>
      </thead>
      <tbody>
        {MEASUREMENTS.map((line, i) => (
          <DataRow key={i} n={FIRST_ROW + i} line={line} />
        ))}
      </tbody>
    </table>
  );
}

/* ── Scroll bars, sheet tabs, status bar ────────────── */

function ScrollButton({ label, d }: { label: string; d: string }) {
  return (
    <button type="button" aria-label={label} className="flex h-[15px] w-[15px] shrink-0 items-center justify-center border border-[#ababab] bg-white">
      <svg width="7" height="7" viewBox="0 0 7 7" aria-hidden="true"><path d={d} fill="#666" /></svg>
    </button>
  );
}

function VerticalScroll() {
  return (
    <div className="mt-[3px] mr-[3px] ml-auto flex w-[15px] shrink-0 flex-col">
      <ScrollButton label="Nahoru" d="M0 5.500h7l-3.500-4z" />
      <div className="grow bg-[#f0f0f0]">
        <div className="h-[17px] border border-[#ababab] bg-white" />
      </div>
      <ScrollButton label="Dolů" d="M0 1.500h7l-3.500 4z" />
    </div>
  );
}

const SHEETS: [string, string][] = [
  ['prehled_smrk', 'w-[106px]'],
  ['prehled_borovice', 'w-[129px]'],
  ['prehled_modrin', 'w-[121px]'],
  ['prehled_listnate', 'w-[121px]'],
];

function SheetTabs() {
  return (
    <div className="flex h-7 shrink-0 items-start border-t border-[#ababab] bg-[#f5f5f5] text-xs text-[#555]">
      <div className="flex h-[27px] w-[100px] items-center pl-[27px]">
        <button type="button" aria-label="Předchozí list">
          <svg width="5" height="8" viewBox="0 0 5 8" aria-hidden="true"><path d="M5 0v8L0 4z" fill="#bbb" /></svg>
        </button>
        <button type="button" aria-label="Další list" className="ml-6">
          <svg width="5" height="8" viewBox="0 0 5 8" aria-hidden="true"><path d="M0 0v8l5-4z" fill="#bbb" /></svg>
        </button>
      </div>
      <button
        type="button"
        className="-mt-px h-[25px] w-[120px] border-x border-b-2 border-x-[#ababab] border-b-[#217346] bg-white pt-[3px] font-bold text-[#217346]"
      >
        prehled_celkem
      </button>
      {SHEETS.map(([name, width]) => (
        <button key={name} type="button" className={`mt-[3px] h-5 shrink-0 border-r border-[#ababab] ${width}`}>
          {name}
        </button>
      ))}
      <button type="button" aria-label="Nový list" className="mt-[5px] ml-[33px]">
        <svg width="17" height="17" viewBox="0 0 17 17" fill="none" stroke="#777" aria-hidden="true">
          <circle cx="8.500" cy="8.500" r="7.500" />
          <path d="M8.500 4.500v8M4.500 8.500h8" strokeWidth="2" />
        </svg>
      </button>
      <div className="mt-[6px] mr-6 ml-auto flex w-[451px] items-center">
        <svg width="2" height="10" viewBox="0 0 2 10" fill="#aaa" aria-hidden="true">
          <path d="M0 0h2v2H0zM0 4h2v2H0zM0 8h2v2H0z" />
        </svg>
        <span className="ml-[15px]"><ScrollButton label="Vlevo" d="M5.500 0v7l-4-3.500z" /></span>
        <div className="h-[15px] grow bg-[#e8e8e8]">
          <div className="h-full w-[17px] border border-[#ababab] bg-white" />
        </div>
        <ScrollButton label="Vpravo" d="M1.500 0v7l4-3.500z" />
      </div>
    </div>
  );
}

function StatusBar() {
  return (
    <footer className="shrink-0 border-b-2 border-[#7d786f] bg-[#217346] text-white">
      <div className="flex h-[21px] items-center pr-[15px] pl-[7px]">
        <span>PŘIPRAVEN</span>
        <button type="button" aria-label="Normálně" className="ml-auto flex h-full w-[38px] items-center justify-center bg-[#0a6332]">
          <svg width="13" height="13" viewBox="0 0 13 13" fill="none" stroke="#fff" shapeRendering="crispEdges" aria-hidden="true">
            <path d="M.5 .5h12v12H.5zM0 4.500h13M0 8.500h13M4.500 0v13M8.500 0v13" />
          </svg>
        </button>
        <button type="button" aria-label="Rozložení stránky" className="flex w-[38px] justify-center">
          <svg width="14" height="13" viewBox="0 0 14 13" fill="none" stroke="#fff" shapeRendering="crispEdges" aria-hidden="true">
            <path d="M.5 .5h13v12H.5zM3.500 2.500h7v8h-7zM5 4.500h4M5 6.500h4M5 8.500h4" />
          </svg>
        </button>
        <button type="button" aria-label="Konce stránek" className="flex w-[38px] justify-center">
          <svg width="14" height="13" viewBox="0 0 14 13" shapeRendering="crispEdges" aria-hidden="true">
            <path d="M.5 .5h13v12H.5z" fill="none" stroke="#fff" />
            <path d="M1 1h4v7H1zM6 1h4v5H6z" fill="#fff" />
          </svg>
        </button>
        <button type="button" aria-label="Oddálit" className="ml-[5px]">
          <svg width="7" height="8" viewBox="0 0 7 8" aria-hidden="true"><path d="M0 3h6v2H0z" fill="#fff" /></svg>
        </button>
        <span className="relative mx-[3px] flex items-center">
          <input
            type="range"
            aria-label="Lupa"
            min="10"
            max="190"
            defaultValue="90"
            className="h-3 w-[100px] appearance-none bg-[linear-gradient(#fff,#fff)] bg-[length:100%_1px] bg-center bg-no-repeat [&::-webkit-slider-thumb]:h-3 [&::-webkit-slider-thumb]:w-1 [&::-webkit-slider-thumb]:appearance-none [&::-webkit-slider-thumb]:bg-white"
          />
          <span className="pointer-events-none absolute left-1/2 h-[5px] w-px bg-white" />
        </span>
        <button type="button" aria-label="Přiblížit">
          <svg width="8" height="8" viewBox="0 0 8 8" aria-hidden="true"><path d="M3 0h2v3h3v2H5v3H3V5H0V3h3z" fill="#fff" /></svg>
        </button>
        <span className="w-[39px] pl-[15px] whitespace-nowrap">90 %</span>
      </div>
    </footer>
  );
}

export default function App() {
  return (
    <div className="flex h-screen flex-col overflow-hidden bg-white font-['Open_Sans','Noto_Sans',sans-serif] text-[11px]">
      <TitleBar />
      <RibbonTabs />
      <Ribbon />
      <FormulaBar />
      <main className="flex min-h-0 grow">
        <div className="min-h-0 overflow-hidden">
          <Sheet />
        </div>
        <VerticalScroll />
      </main>
      <SheetTabs />
      <StatusBar />
    </div>
  );
}
